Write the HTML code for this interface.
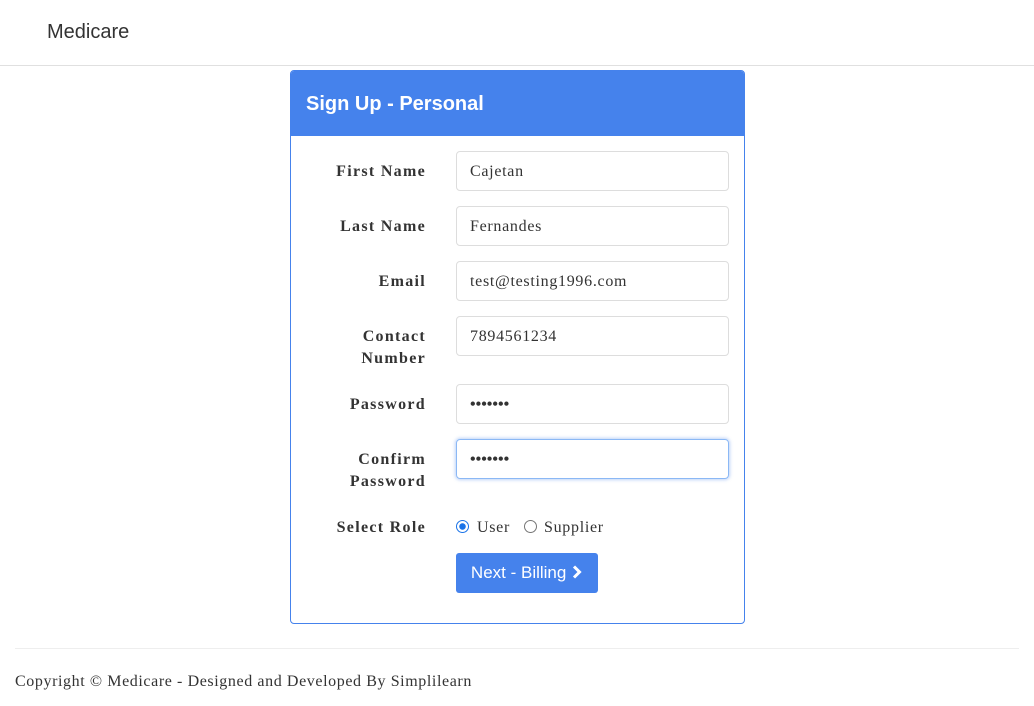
<!DOCTYPE html>
<html><head><style>
body{margin:0;width:1034px;height:706px;background:#fff;font-family:"Liberation Serif",serif;color:#333;position:relative;overflow:hidden}
.a{position:absolute}
.brand{left:47px;top:21px;font:20px "Liberation Sans",sans-serif;color:#333}
.nav{left:0;top:65px;width:1034px;height:1px;background:#e0e0e0}
.card{left:290px;top:70px;width:453px;height:552px;border:1px solid #4582ec;border-radius:4px;overflow:hidden}
.hd{left:0;top:0;width:453px;height:65px;background:#4582ec;color:#fff;font:bold 20px "Liberation Sans",sans-serif;line-height:66px;padding-left:15px;box-sizing:border-box}
.lb{width:136px;left:290px;text-align:right;font-weight:bold;font-size:16px;line-height:22px;color:#333;letter-spacing:1.3px}
.in{left:456px;height:38px;border:1px solid #ddd;border-radius:4px;font-size:16px;line-height:40px;padding-left:13px;width:258px;color:#333;letter-spacing:0.7px}
.focus{border-color:#8bb8f5;box-shadow:0 0 3px 1px rgba(69,130,236,.35)}
.btn{left:456px;top:553px;width:142px;height:40px;background:#4582ec;border-radius:3px;color:#fff;font:17px "Liberation Sans",sans-serif;line-height:40px;text-align:center}
.hr{left:15px;top:648px;width:1004px;height:1px;background:#eee}
.ft{left:15px;top:673px;font-size:16px;color:#333;letter-spacing:0.6px}
.rad{width:11px;height:11px;border-radius:50%;border:1px solid #767676}
.t{font-size:16px;line-height:22px;letter-spacing:0.7px}
</style></head><body>
<div class="a brand">Medicare</div>
<div class="a nav"></div>
<div class="a card"><div class="a hd">Sign Up - Personal</div></div>
<div class="a lb" style="top:161px">First Name</div>
<div class="a in" style="top:151px">Cajetan</div>
<div class="a lb" style="top:216px">Last Name</div>
<div class="a in" style="top:206px">Fernandes</div>
<div class="a lb" style="top:271px">Email</div>
<div class="a in" style="top:261px">test@testing1996.com</div>
<div class="a lb" style="top:326px">Contact<br>Number</div>
<div class="a in" style="top:316px">7894561234</div>
<div class="a lb" style="top:394px">Password</div>
<div class="a in" style="top:384px;font-weight:bold;letter-spacing:0">•••••••</div>
<div class="a lb" style="top:449px">Confirm<br>Password</div>
<div class="a in focus" style="top:439px;font-weight:bold;letter-spacing:0">•••••••</div>
<div class="a lb" style="top:517px">Select Role</div>
<div class="a rad" style="left:456px;top:520px;border:1px solid #1a73e8;background:radial-gradient(circle,#1a73e8 3px,#fff 3.5px)"></div>
<div class="a t" style="left:477px;top:517px">User</div>
<div class="a rad" style="left:524px;top:520px"></div>
<div class="a t" style="left:544px;top:517px">Supplier</div>
<div class="a btn">Next - Billing <svg width="12" height="14" viewBox="0 0 12 14" style="vertical-align:-1px"><path d="M3 1.5L8.5 7L3 12.5" stroke="#fff" stroke-width="3" fill="none"/></svg></div>
<div class="a hr"></div>
<div class="a ft">Copyright © Medicare - Designed and Developed By Simplilearn</div>
</body></html>
